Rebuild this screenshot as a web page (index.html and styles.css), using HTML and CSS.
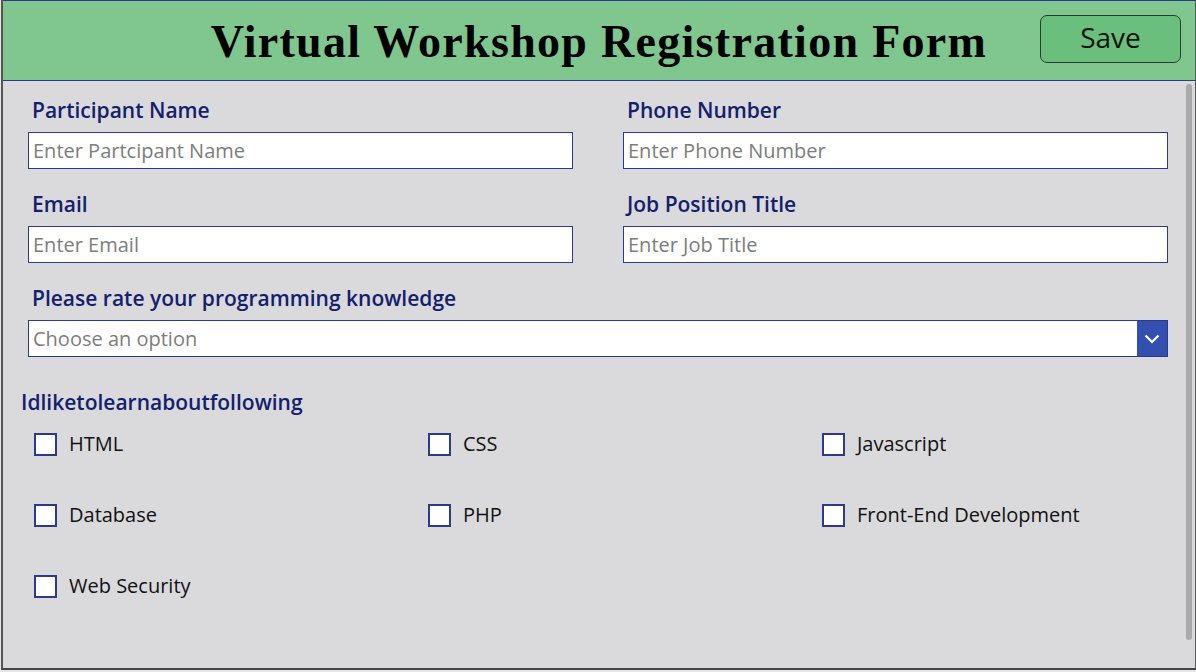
FILE: index.html
```html
<!DOCTYPE html>
<html lang="en">
<head>
    <meta charset="UTF-8">
    <meta name="viewport" content="width=device-width, initial-scale=1.0">
    <title>Virtual Workshop Registration Form</title>
    <link rel="stylesheet" href="styles.css">
</head>
<body>
    <div class="app">
        <!-- Header bar -->
        <header class="header">
            <div></div>
            <h1 class="title">Virtual Workshop Registration Form</h1>
            <button class="save-btn">Save</button>
        </header>

        <main class="form-area">
            <div class="form">
                <div class="field-grid">
                    <div class="field">
                        <label class="label">Participant Name</label>
                        <input type="text" class="text-input" placeholder="Enter Partcipant Name">
                    </div>
                    <div class="field">
                        <label class="label">Phone Number</label>
                        <input type="text" class="text-input" placeholder="Enter Phone Number">
                    </div>
                    <div class="field">
                        <label class="label">Email</label>
                        <input type="text" class="text-input" placeholder="Enter Email">
                    </div>
                    <div class="field">
                        <label class="label">Job Position Title</label>
                        <input type="text" class="text-input" placeholder="Enter Job Title">
                    </div>
                    <div class="field wide">
                        <label class="label">Please rate your programming knowledge</label>
                        <div class="dropdown">
                            <span class="dropdown-text">Choose an option</span>
                            <span class="dropdown-btn">
                                <svg width="16" height="10" viewBox="0 0 16 10">
                                    <polyline points="1.5,1.5 8,8 14.5,1.5" fill="none" stroke="#fff" stroke-width="2.2"/>
                                </svg>
                            </span>
                        </div>
                    </div>
                </div>

                <h2 class="group-title">Idliketolearnaboutfollowing</h2>
                <div class="check-grid">
                    <label class="check"><span class="box"></span>HTML</label>
                    <label class="check"><span class="box"></span>CSS</label>
                    <label class="check"><span class="box"></span>Javascript</label>
                    <label class="check"><span class="box"></span>Database</label>
                    <label class="check"><span class="box"></span>PHP</label>
                    <label class="check"><span class="box"></span>Front-End Development</label>
                    <label class="check"><span class="box"></span>Web Security</label>
                </div>
            </div>
            <div class="scrollbar"></div>
        </main>
    </div>
</body>
</html>
```

FILE: styles.css
```css
/* Global styles */
body {
    margin: 0;
    background-color: #e6e6e6;
    font-family: 'Open Sans', 'Liberation Sans', sans-serif;
}

.app {
    width: 1192px;
    height: 668px;
    margin: 0 0 0 1px;
    border-left: 2px solid #555;
    border-right: 2px solid #555;
    border-bottom: 2px solid #444;
    background-color: #dadadd;
    display: flex;
    flex-direction: column;
    overflow: hidden;
}

/* Header */
.header {
    height: 79px;
    background-color: #7fc68f;
    border-top: 1px solid #2b3a8c;
    border-bottom: 1px solid #2b3a8c;
    display: grid;
    grid-template-columns: 1fr auto 1fr;
    align-items: center;
}

.title {
    margin: 0;
    font-family: 'Liberation Serif', 'DejaVu Serif', serif;
    font-weight: bold;
    font-size: 46px;
    color: #000;
    letter-spacing: 1.3px;
    padding-top: 2px;
}

.save-btn {
    justify-self: end;
    margin-right: 14px;
    margin-top: -4px;
    width: 141px;
    height: 48px;
    background-color: #6bbf7d;
    border: 1px solid #2e3a2f;
    border-radius: 7px;
    font-family: 'Open Sans', sans-serif;
    font-size: 28px;
    font-weight: 500;
    color: #111;
    padding: 0 0 4px 0;
    cursor: pointer;
}

/* Form body */
.form-area {
    flex: 1;
    position: relative;
    display: flex;
}

.form {
    padding: 16px 0 0 25px;
}

.field-grid {
    display: grid;
    grid-template-columns: 545px 545px;
    column-gap: 50px;
    row-gap: 22px;
}

.field {
    display: flex;
    flex-direction: column;
}

.field.wide {
    grid-column: 1 / 3;
}

.label {
    font-size: 21px;
    line-height: 26px;
    font-weight: 600;
    color: #14206c;
    padding-left: 4px;
    margin-bottom: 9px;
}

.text-input {
    height: 37px;
    box-sizing: border-box;
    border: 1px solid #2b3a8c;
    background-color: #fff;
    margin: 0;
    padding: 0 4px;
    font-family: 'Open Sans', sans-serif;
    font-size: 20px;
    outline: none;
}

.text-input::placeholder {
    color: #7d7d7d;
}

.dropdown {
    height: 37px;
    box-sizing: border-box;
    border: 1px solid #2b3a8c;
    background-color: #fff;
    display: flex;
    align-items: center;
}

.dropdown-text {
    flex: 1;
    padding-left: 4px;
    font-size: 20px;
    color: #7d7d7d;
}

.dropdown-btn {
    width: 30px;
    height: 35px;
    background-color: #3350b0;
    display: flex;
    align-items: center;
    justify-content: center;
}

/* Checkbox group */
.group-title {
    margin: 32px 0 0 -7px;
    font-size: 21px;
    line-height: 26px;
    font-weight: 600;
    color: #14206c;
}

.check-grid {
    display: grid;
    grid-template-columns: repeat(3, 394px);
    grid-auto-rows: 71px;
    margin-top: 16px;
    margin-left: 6px;
}

.check {
    display: flex;
    align-items: flex-start;
    font-size: 20px;
    line-height: 26px;
    color: #111;
}

.box {
    width: 23px;
    height: 23px;
    box-sizing: border-box;
    border: 2px solid #2b3a8c;
    background-color: #fff;
    margin: 2px 12px 0 0;
}

.scrollbar {
    position: absolute;
    right: 3px;
    top: 3px;
    width: 6px;
    height: 556px;
    border-radius: 3px;
    background-color: #aaaaaa;
}
```
